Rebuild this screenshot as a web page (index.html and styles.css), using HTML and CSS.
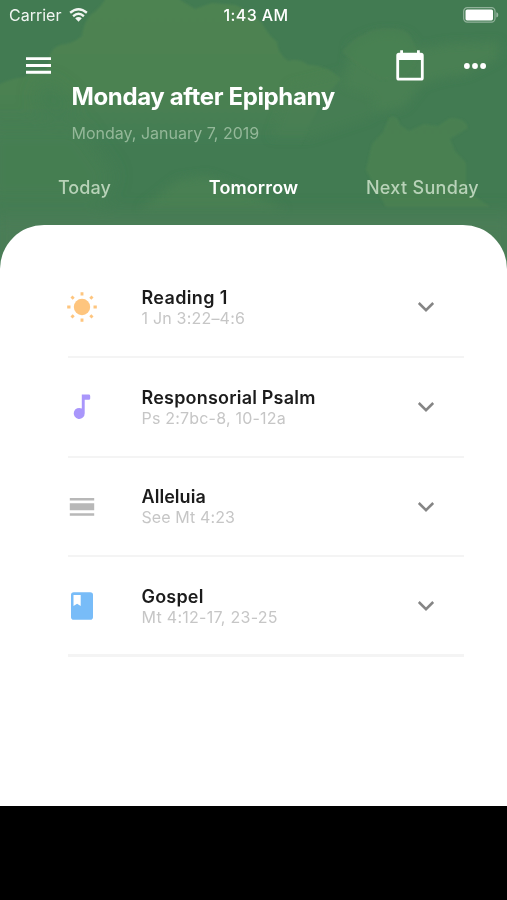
FILE: index.html
```html
<!DOCTYPE html>
<html lang="en">
<head>
<meta charset="utf-8">
<meta name="viewport" content="width=device-width, initial-scale=1">
<title>Daily Readings</title>
<link rel="stylesheet" href="styles.css">
</head>
<body>
<div class="app">
  <svg class="clouds" viewBox="0 0 507 280" preserveAspectRatio="none" aria-hidden="true">
    <defs>
      <filter id="soft" x="-10%" y="-10%" width="120%" height="120%"><feGaussianBlur stdDeviation="1.3"/></filter>
      <filter id="mid" x="-20%" y="-20%" width="140%" height="140%"><feGaussianBlur stdDeviation="5"/></filter>
      <filter id="haze" x="-30%" y="-30%" width="160%" height="160%"><feGaussianBlur stdDeviation="9"/></filter>
      <linearGradient id="fade" gradientUnits="userSpaceOnUse" x1="0" y1="0" x2="0" y2="145"><stop offset="0" stop-color="#4e8351"/><stop offset=".6" stop-color="#4c8251"/><stop offset="1" stop-color="#427c53"/></linearGradient>
      <linearGradient id="fade-low" gradientUnits="userSpaceOnUse" x1="0" y1="115" x2="0" y2="215"><stop offset="0" stop-color="#4b8152"/><stop offset="1" stop-color="#4c8251"/></linearGradient>
    </defs>
    <g filter="url(#soft)" fill="url(#fade)">
      <path d="M108 -6 Q101 9 90 15 Q83 25 82 36 Q73 44 60 45 Q48 50 50 60 L46 70 Q32 68 25 77 Q10 78 -8 88 V145 H300 L322 100 L341 79 Q325 64 308 65 Q299 58 288 61 Q277 53 277 42 Q267 34 262 23 Q249 10 235 5 L212 3 L195 9 L180 0 V-6Z"/>
    </g>
    <g filter="url(#mid)" fill="#4a8052">
      <path d="M350 45 L365 37 Q388 27 408 36 L419 50 L446 44 L498 42 V58 L466 74 L441 78 L422 84 L404 107 L375 113 L374 96 L345 86Z"/>
      <path d="M290 85 L350 70 L400 85 L370 118 L310 138 H270Z" opacity=".45"/>
      <path d="M178 180 L207 176 L240 188 L285 210 H140Z"/>
    </g>
    <g filter="url(#soft)" fill="url(#fade-low)">
      <path d="M342 52 Q354 38 365 34 Q374 28 388 29 Q404 27 411 37 L416 49 Q420 66 404 76 L382 80 L362 68Z" opacity=".65"/>
      <path d="M366 170 L372 144 L383 132 L389 118 Q397 113 400 125 L409 131 L424 124 L438 126 L450 118 Q465 117 468 128 L450 139 L455 151 L466 163 V190 L490 207 H386Z" opacity=".85"/>
    </g>
    <g filter="url(#haze)">
      <path fill="#437d53" opacity=".65" d="M34 96 L44 80 L60 89 L75 104 L65 119 L40 110Z"/>
      <path fill="#4a8151" opacity=".6" d="M-15 125 H80 L115 175 L100 205 H-15Z"/>
      <path fill="#4e7e57" opacity=".85" d="M-10 214 H517 V290 H-10Z"/>
    </g>
  </svg>

  <div class="status">
    <div class="carrier"><span>Carrier</span>
      <svg width="19" height="14" viewBox="0 0 20 14" preserveAspectRatio="none" fill="none" stroke="#fff" stroke-width="2.5"><path d="M1.2 4.8 Q10-2.2 18.8 4.8M4.3 8.2 Q10 3.4 15.7 8.2"/><path fill="#fff" stroke="none" d="M6.5 10.3 Q10 7.5 13.5 10.3 L10 13.8Z"/></svg>
    </div>
    <span class="clock">1:43 AM</span>
    <svg class="battery" width="36" height="16" viewBox="0 0 36 16"><rect x=".7" y=".7" width="31.3" height="14.4" rx="3.6" fill="none" stroke="#fff" stroke-opacity=".42" stroke-width="1.2"/><rect x="2.5" y="2.4" width="27.5" height="11" rx="1.6" fill="#fff"/><path d="M33.3 5.3 Q35.3 5.6 35.3 7.9 T33.3 10.5Z" fill="#fff" opacity=".45"/></svg>
  </div>

  <header class="header">
    <svg class="menu" width="25" height="17" viewBox="0 0 25 17" fill="#fff"><path d="M0 .2H25V3.1H0ZM0 7H25V9.9H0ZM0 13.8H25V16.7H0Z"/></svg>
    <div class="heading">
      <h1>Monday after Epiphany</h1>
      <p>Monday, January 7, 2019</p>
    </div>
    <div class="actions">
      <svg width="28" height="31" viewBox="0 0 28 31" fill="#fff"><path fill-rule="evenodd" d="M3 2.7H4.2V.3H7V2.7H21V.3H23.8V2.7H25Q27.7 2.7 27.7 5.5V28Q27.7 30.6 25 30.6H3Q.3 30.6 .3 28V5.5Q.3 2.7 3 2.7ZM3.1 10V27.8H24.9V10Z"/></svg>
      <svg width="22" height="6" viewBox="0 0 22 6" fill="#fff"><circle cx="2.9" cy="3" r="2.9"/><circle cx="11" cy="3" r="2.9"/><circle cx="19.1" cy="3" r="2.9"/></svg>
    </div>
  </header>

  <nav class="tabs">
    <span class="tab">Today</span><span class="tab active">Tomorrow</span><span class="tab wide">Next Sunday</span>
  </nav>

  <main class="sheet">
    <section class="row reading">
      <svg class="icon" width="32" height="32" viewBox="0 0 32 32"><circle cx="16" cy="16" r="8.2" fill="#fec57e"/><path d="M16 1.2V4.5M16 27.5V30.8M1.2 16H4.5M27.5 16H30.8M5.5 5.5L7.7 7.7M24.3 24.3L26.5 26.5M5.5 26.5L7.7 24.3M24.3 7.7L26.5 5.5" stroke="#fec57e" stroke-width="2.9"/></svg>
      <div class="text"><h2>Reading 1</h2><p>1 Jn 3:22–4:6</p></div>
      <svg class="chev" width="18" height="12" viewBox="0 0 18 12"><path d="M1.8 2L9 9.2L16.2 2"/></svg>
    </section>
    <section class="row psalm">
      <svg class="icon" width="32" height="32" viewBox="0 0 32 32" fill="#a996fb"><path d="M15.8 3.6H22.8Q24.2 3.6 24.2 5V7.5Q24.2 8.8 22.8 8.8H18.7V22.3A5.5 5.5 0 1 1 15.8 17.6Z"/></svg>
      <div class="text"><h2>Responsorial Psalm</h2><p>Ps 2:7bc-8, 10-12a</p></div>
      <svg class="chev" width="18" height="12" viewBox="0 0 18 12"><path d="M1.8 2L9 9.2L16.2 2"/></svg>
    </section>
    <section class="row alleluia">
      <svg class="icon" width="32" height="32" viewBox="0 0 32 32" fill="#b8b8b8"><path d="M3.8 7H28.2V9.5H3.8ZM3.8 12.2H28.2V19.3H3.8ZM3.8 22.2H28.2V24.7H3.8Z"/></svg>
      <div class="text"><h2>Alleluia</h2><p>See Mt 4:23</p></div>
      <svg class="chev" width="18" height="12" viewBox="0 0 18 12"><path d="M1.8 2L9 9.2L16.2 2"/></svg>
    </section>
    <section class="row gospel">
      <svg class="icon" width="32" height="32" viewBox="0 0 32 32"><rect x="5" y="2.2" width="22" height="27.5" rx="2.8" fill="#78bcf8"/><path d="M7.5 5H14.7V16L11.1 13.8L7.5 16Z" fill="#fff"/></svg>
      <div class="text"><h2>Gospel</h2><p>Mt 4:12-17, 23-25</p></div>
      <svg class="chev" width="18" height="12" viewBox="0 0 18 12"><path d="M1.8 2L9 9.2L16.2 2"/></svg>
    </section>
  </main>
</div>
</body>
</html>
```

FILE: styles.css
```css
* { box-sizing: border-box; margin: 0; padding: 0; }
html, body { height: 100%; overflow: hidden; }
body { background: #000; font-family: Inter, "Liberation Sans", sans-serif; }
svg { display: block; flex: none; }
.app { position: relative; display: flex; flex-direction: column; width: 507px; height: 806px; background: #427b52; overflow: hidden; }
.clouds { position: absolute; inset: 0 0 auto; width: 507px; height: 280px; }
.status, .header, .tabs, .sheet { position: relative; }

.status { display: grid; grid-template-columns: 1fr auto 1fr; align-items: center; height: 30px; padding: 0 8px 0 9px; color: #fff; font-size: 16px; line-height: 20px; }
.carrier { display: flex; align-items: center; gap: 8px; opacity: .92; }
.carrier svg { margin-bottom: 1px; }
.clock { font-weight: 500; margin-left: 4px; letter-spacing: .4px; }
.battery { justify-self: end; }

.header { display: flex; align-items: flex-start; height: 132px; padding: 20px 21px 0 26px; color: #fff; white-space: nowrap; }
.menu { margin-top: 7px; }
.heading { flex: 1; margin-left: 20.5px; padding-top: 32px; }
.heading h1 { font-size: 24px; line-height: 30px; font-weight: 700; letter-spacing: -.36px; }
.heading p { margin-top: 11px; font-size: 16px; line-height: 20px; color: #94b899; }
.actions { display: flex; align-items: center; gap: 40px; }

.tabs { display: flex; height: 63px; padding-top: 14px; font-size: 18px; line-height: 24px; font-weight: 500; white-space: nowrap; }
.tab { flex: 1; text-align: center; color: #b8d2b8; letter-spacing: .1px; }
.tab.active { color: #fff; font-weight: 600; }
.wide { letter-spacing: .3px; }

.sheet { flex: 1; padding: 33px 43px 0 68px; background: #fff; border-radius: 44px 44px 0 0; }
.row { display: flex; align-items: center; height: 99.75px; border-bottom: 2px solid #f4f4f4; }
.row:last-child { border-bottom-width: 3px; }
.icon { margin-left: -2px; }
.text { flex: 1; margin-left: 43.5px; padding-top: 1px; white-space: nowrap; }
.text h2 { font-size: 18px; line-height: 22px; font-weight: 600; color: #1b1b1b; }
.text p { margin-top: -1px; font-size: 16px; line-height: 20px; color: #c6c6c6; }
.reading h2 { letter-spacing: .35px; }
.reading p { letter-spacing: .2px; }
.psalm h2 { letter-spacing: .2px; }
.psalm p { letter-spacing: .2px; }
.alleluia h2 { letter-spacing: .05px; }
.alleluia p { letter-spacing: .1px; }
.gospel h2 { letter-spacing: .2px; }
.gospel p { letter-spacing: .28px; }
.alleluia .icon, .alleluia .chev, .gospel .icon, .gospel .chev { margin-top: 1px; }
.chev { margin-right: 29px; fill: none; stroke: #858585; stroke-width: 2.5; }
```
